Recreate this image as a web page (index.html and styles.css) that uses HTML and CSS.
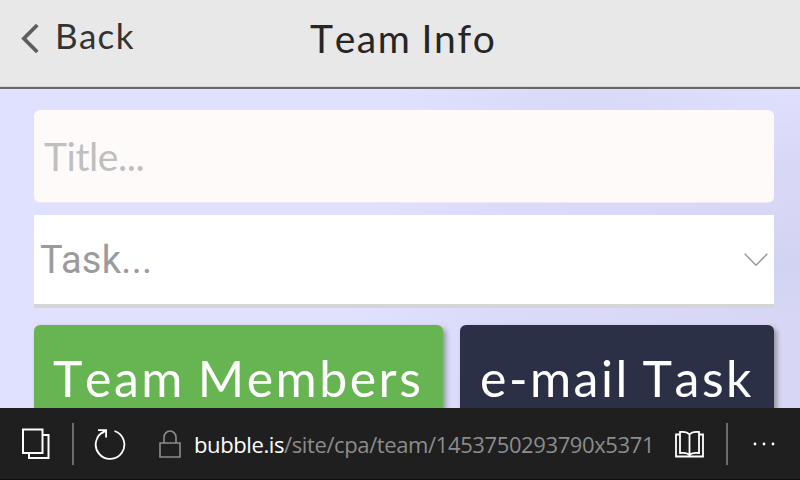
FILE: index.html
```html
<!DOCTYPE html>
<html lang="en">
<head>
<meta charset="utf-8">
<title>Team Info</title>
<link rel="stylesheet" href="styles.css">
</head>
<body>
<div class="screen">
  <header class="topbar">
    <a class="back">
      <svg class="back-icon" width="20" height="32" viewBox="0 0 20 32" fill="none" stroke="#5d5d61" stroke-width="3.8"><path d="M17.3 3 3.9 16.5 17.3 30"/></svg>
      <span class="back-label">Back</span>
    </a>
    <h1 class="title">Team Info</h1>
  </header>
  <main class="content">
    <div class="field"><span class="field-text">Title...</span></div>
    <div class="select">
      <span class="select-text">Task...</span>
      <svg class="chevron" width="24" height="14" viewBox="0 0 24 14" fill="none" stroke="#999" stroke-width="1.5"><path d="M.7 .8 12 12.2 23.3 .8"/></svg>
    </div>
    <div class="actions">
      <div class="button members"><span class="members-text">Team Members</span></div>
      <div class="button email"><span class="email-text">e-mail Task</span></div>
    </div>
  </main>
  <footer class="browser-bar">
    <svg class="tabs" width="28" height="31" viewBox="0 0 28 31" fill="none" stroke="#fff" stroke-width="2"><path d="M1 1.500H20.500V25H1ZM21 7H26.500V30H7V25"/></svg>
    <span class="divider"></span>
    <svg class="reload" width="32" height="32" viewBox="0 0 32 32" fill="none" stroke="#fff" stroke-width="1.8"><path d="M20.500 3A14.300 14.300 0 1 1 10.500 3.400M4 2.200H12.100V9.500M11.800 2.500 8 5.200"/></svg>
    <svg class="lock" width="22" height="28" viewBox="0 0 22 28" fill="none" stroke="#8c8c8c" stroke-width="1.6"><path d="M1 13H21V27H1ZM5 13V7.500A6 6.500 0 0 1 17 7.500V13"/></svg>
    <div class="url"><span class="host">bubble.is</span><span class="path">/site/cpa/team/1453750293790x5371</span></div>
    <svg class="book" width="29" height="28" viewBox="0 0 29 28" fill="none" stroke="#fff" stroke-width="1.8"><path d="M5 4.500H1V26.500H28V4.500H24M14.500 4.500C12 1.500 8.500 1.500 5 2V23C9 22.500 12.500 22.500 14.500 25C16.500 22.500 20 22.500 24 23V2C20.500 1.500 17 1.500 14.500 4.500V25"/></svg>
    <span class="divider second"></span>
    <svg class="more" width="24" height="4" viewBox="0 0 24 4" fill="#fff"><circle cx="3" cy="2" r="1.4"/><circle cx="12" cy="2" r="1.4"/><circle cx="21" cy="2" r="1.4"/></svg>
  </footer>
</div>
</body>
</html>
```
FILE: styles.css
```css
* { box-sizing: border-box; }

body { margin: 0; }

.screen {
  width: 800px;
  height: 480px;
  overflow: hidden;
  display: flex;
  flex-direction: column;
  font-family: Lato, sans-serif;
  font-kerning: none;
  white-space: nowrap;
}

.topbar {
  height: 89px;
  flex: none;
  display: grid;
  grid-template-columns: 310px 1fr;
  background: #e8e8e8;
  border-bottom: 2px solid #6b686b;
  box-shadow: inset 0 -1px #d6d6d6;
}

.back {
  display: flex;
  align-items: flex-start;
  padding: 22px 0 0 20px;
}

.back-label {
  margin: -8px 0 0 15px;
  font-size: 35px;
  line-height: 42px;
  letter-spacing: 1.3px;
  color: #333;
}

.title {
  margin: 16px 0 0;
  font-size: 39px;
  line-height: 44px;
  font-weight: 400;
  letter-spacing: 1.6px;
  word-spacing: -1.5px;
  color: #262626;
}

.content {
  flex: 1;
  min-height: 0;
  overflow: hidden;
  padding: 21px 26px 0 34px;
  background:
    radial-gradient(ellipse at 100% 55%, rgba(200, 200, 235, .35), transparent 25%),
    radial-gradient(ellipse at 100% 0%, rgba(224, 224, 255, .9), transparent 18%),
    linear-gradient(100deg, #e0e0ff 0%, #e0e0ff 46%, #dadaf9 62%, #d7d7f5 100%);
}

.field {
  height: 93px;
  padding-left: 10px;
  border-radius: 6px;
  border-bottom: 1px solid #eee8f5;
  background: #fffafa;
}

.field-text {
  font-size: 39px;
  line-height: 93px;
  letter-spacing: -.45px;
  color: #bfbfbf;
}

.select {
  height: 93px;
  margin-top: 12px;
  padding: 0 6px 0 6px;
  display: flex;
  align-items: center;
  justify-content: space-between;
  background: #fff;
  border-bottom: 4px solid #d5d5d5;
}

.select-text {
  padding-top: 2px;
  font-family: Roboto, sans-serif;
  font-size: 38px;
  line-height: 87px;
  letter-spacing: .3px;
  font-kerning: normal;
  color: #9b9b9b;
}

.actions {
  display: grid;
  grid-template-columns: 409px 314px;
  gap: 17px;
  margin-top: 17px;
}

.button {
  height: 106px;
  border-radius: 6px;
  box-shadow: 3px 3px 5px rgba(110, 110, 110, .65);
  color: #fff;
  font-size: 50px;
  line-height: 106px;
  letter-spacing: 2.5px;
  word-spacing: -2.5px;
}

.members { padding-left: 19px; background: #67b452; }
.email { padding-left: 20px; background: #2c3047; }

.browser-bar {
  height: 72px;
  flex: none;
  display: flex;
  align-items: center;
  background: #1f1f1f;
  border-bottom: 1px solid #170c12;
}

.tabs { margin-left: 22px; }
.divider { width: 2px; height: 42px; margin-left: 22px; background: #6d6d6d; }
.reload { margin-left: 20px; }
.lock { margin-left: 33px; }

.url {
  width: 459px;
  margin-left: 13px;
  font-family: "Open Sans", "Noto Sans", sans-serif;
  font-size: 22px;
  line-height: 30px;
  letter-spacing: -.39px;
}

.host { color: #fff; }
.path { color: #8c8c8c; }
.book { margin-left: 22px; }
.second { margin-left: 22px; }
.more { margin-left: 24px; }

.tabs, .reload, .lock, .book, .more, .divider, .chevron { flex: none; }
```
